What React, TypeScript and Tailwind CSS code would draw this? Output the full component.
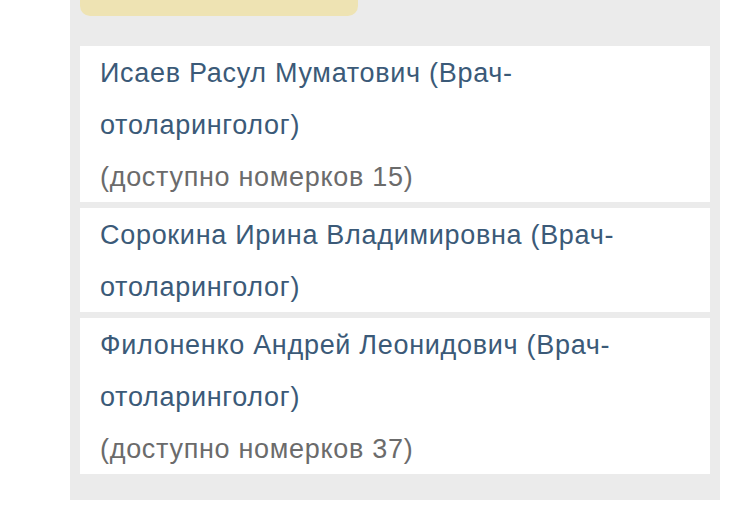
import React from "react";

const doctors = [
  { name: "Исаев Расул Муматович (Врач-", rest: "отоларинголог)", avail: "(доступно номерков 15)" },
  { name: "Сорокина Ирина Владимировна (Врач-", rest: "отоларинголог)", avail: null },
  { name: "Филоненко Андрей Леонидович (Врач-", rest: "отоларинголог)", avail: "(доступно номерков 37)" },
];

export default function App() {
  return (
    <div className="w-[750px] h-[518px] bg-white overflow-hidden" style={{ fontFamily: '"Liberation Sans", Arial, sans-serif' }}>
      <div className="ml-[70px] w-[650px] h-[500px] bg-[#ebebeb] px-[10px] overflow-hidden">
        <div className="-mt-[34px] h-[50px] w-[278px] rounded-[10px] bg-[#eee3b3]" />
        <div className="mt-[30px] flex flex-col gap-[6px]">
          {doctors.map((d, i) => (
            <div key={i} className="bg-white px-[20px] text-[27px] leading-[52px] tracking-[0.7px]">
              <div className="text-[#3b5a78] translate-y-[1px]">{d.name}</div>
              <div className="text-[#3b5a78] translate-y-[1px]">{d.rest}</div>
              {d.avail && <div className="text-[#6b6b6b] translate-y-[1px]">{d.avail}</div>}
            </div>
          ))}
        </div>
      </div>
    </div>
  );
}
